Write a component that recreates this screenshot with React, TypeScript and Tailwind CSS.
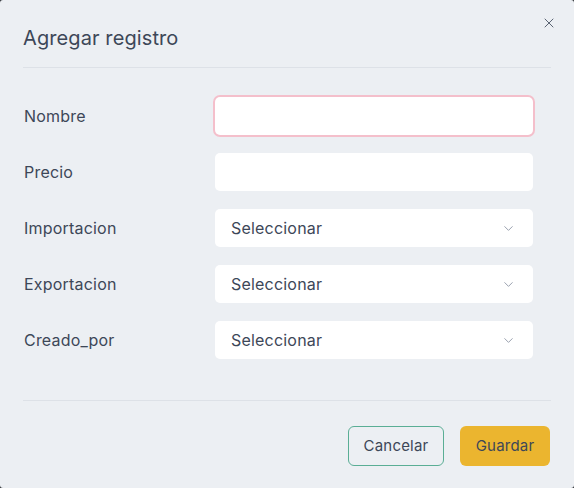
import { X, ChevronDown } from 'lucide-react';

const fields = [
  { label: 'Nombre', type: 'input', focused: true },
  { label: 'Precio', type: 'input' },
  { label: 'Importacion', type: 'select' },
  { label: 'Exportacion', type: 'select' },
  { label: 'Creado_por', type: 'select' },
];

export default function App() {
  return (
    <div className="bg-[#2f3338] min-h-screen" style={{ fontFamily: 'Inter, "Noto Sans", sans-serif' }}>
      <div className="w-[574px] h-[488px] bg-[#eceff3] rounded-[3px] flex flex-col text-[#3d4758]">
        {/* Header */}
        <div className="relative px-[23px] pt-[26px]">
          <h2 className="text-[20px] leading-[24px] tracking-[0.1px] pb-[17px] border-b border-[#dde1e7]">
            Agregar registro
          </h2>
          <button className="absolute right-[17px] top-[15px] text-[#5b6473]">
            <X size={16} strokeWidth={1.5} />
          </button>
        </div>

        {/* Body */}
        <div className="pl-[24px] pr-[41px] pt-[29px] flex flex-col gap-[18px]">
          {fields.map((f) => (
            <div key={f.label} className="flex items-center h-[38px]">
              <label className="w-[191px] text-[16px] tracking-[0.2px] -mt-px">{f.label}</label>
              {f.type === 'input' ? (
                <div
                  className={
                    'flex-1 h-[38px] bg-white rounded-[5px] ' +
                    (f.focused ? 'ring-2 ring-[#f4bfcb]' : '')
                  }
                />
              ) : (
                <div className="flex-1 h-[38px] bg-white rounded-[5px] flex items-center justify-between pl-[16px] pr-[17px]">
                  <span className="text-[16px] tracking-[0.2px]">Seleccionar</span>
                  <ChevronDown size={15} strokeWidth={1.4} className="text-[#8c94a3]" />
                </div>
              )}
            </div>
          ))}
        </div>

        {/* Footer */}
        <div className="mt-auto px-[23px] pb-[22px]">
          <div className="border-t border-[#dde1e7] pt-[25px] pr-px flex justify-end gap-[16px]">
            <button className="h-[40px] w-[96px] rounded-[6px] border border-[#5aae95] text-[15px] tracking-[0.2px]">
              Cancelar
            </button>
            <button className="h-[40px] w-[90px] rounded-[6px] bg-[#ebb52f] text-[15px] tracking-[0.2px]">
              Guardar
            </button>
          </div>
        </div>
      </div>
    </div>
  );
}
